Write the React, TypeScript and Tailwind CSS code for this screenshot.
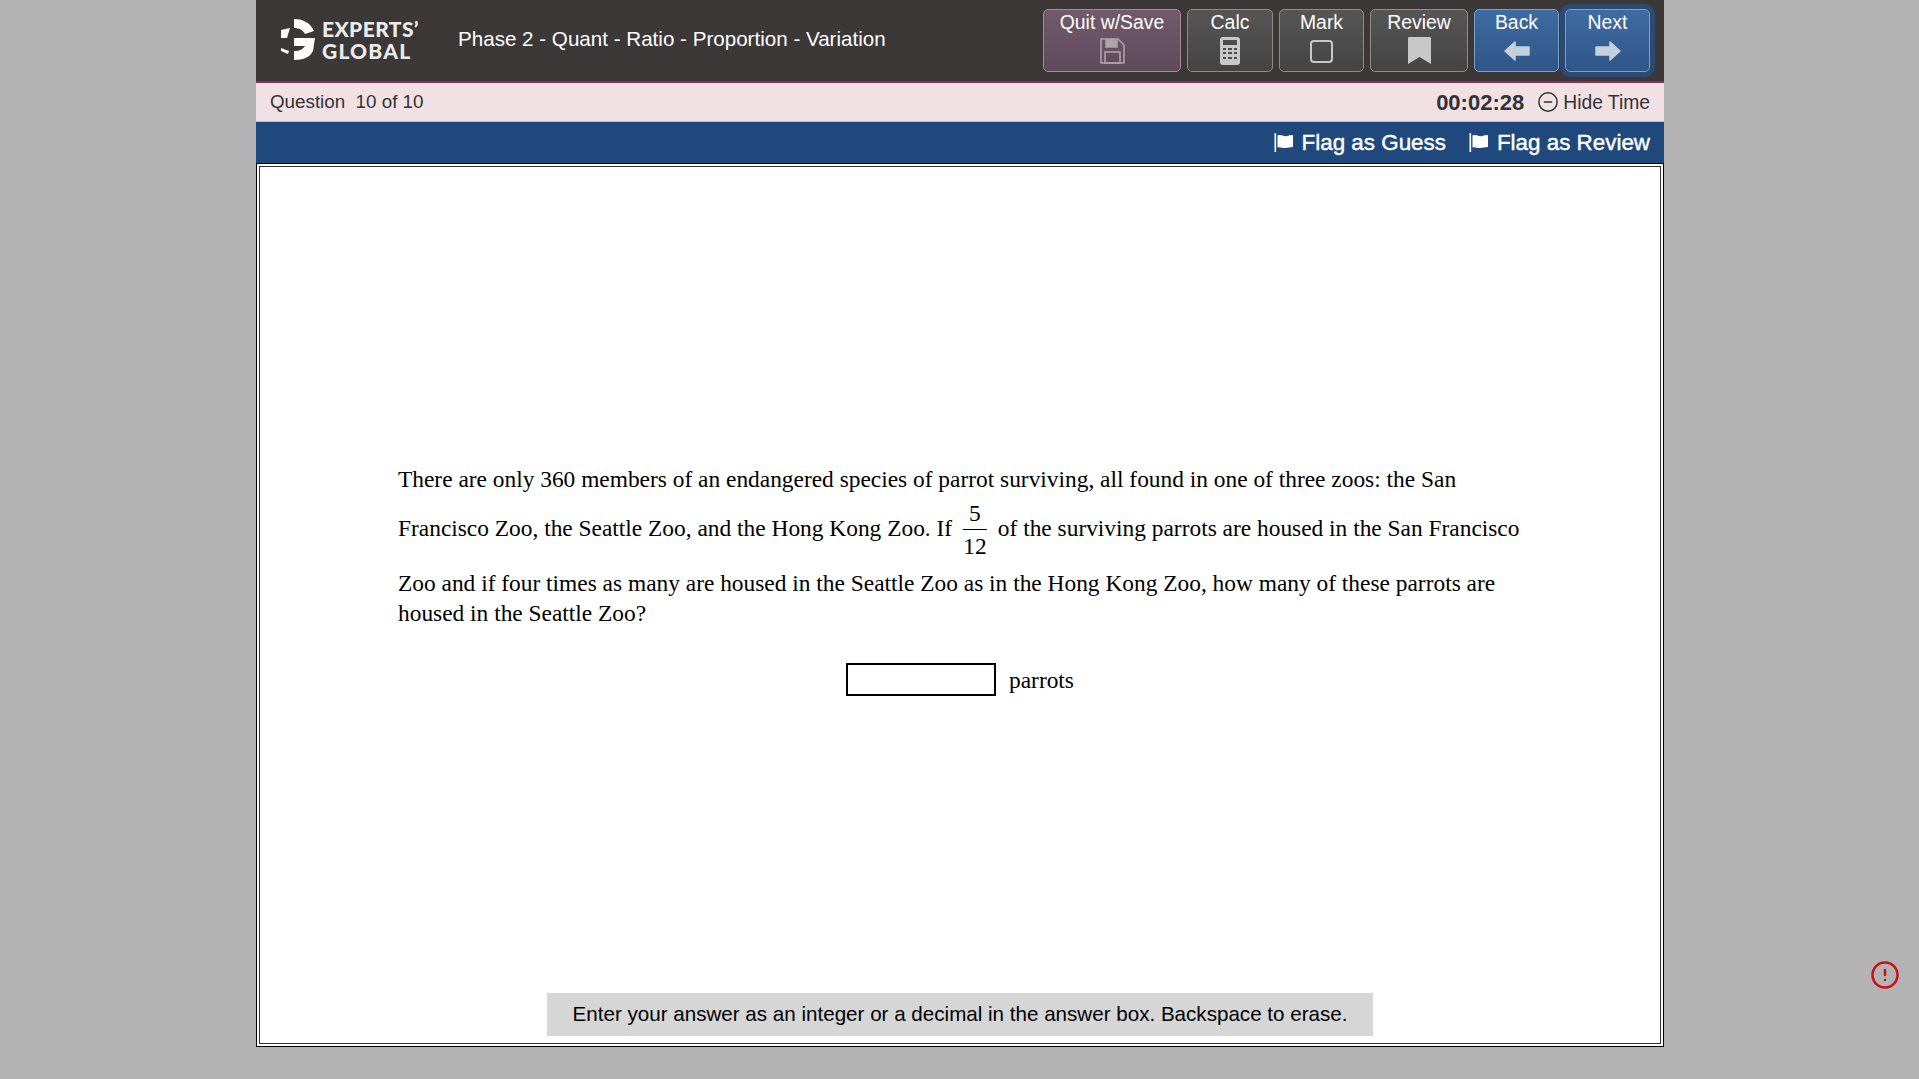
import { CircleAlert, CircleMinus } from 'lucide-react';
import type { ReactNode } from 'react';

const sans = { fontFamily: '"Liberation Sans", Arial, sans-serif' };

function ToolButton({ label, width, tone, children, focused }: { label: string; width: string; tone: string; children: ReactNode; focused?: boolean }) {
  return (
    <button className={`${width} ${tone} ${focused ? 'ring-[5px] ring-[#2c4a72]' : ''} h-[63px] shrink-0 rounded-[5px] border flex flex-col items-center text-white text-[19.4px] leading-[20px] pt-[2px]`}>
      <span>{label}</span>
      <span className="mt-[4px] flex h-[30px] items-center justify-center">{children}</span>
    </button>
  );
}

function Flag() {
  return (
    <svg width="20" height="20" viewBox="0 0 20 20" fill="white">
      <rect x="0.5" y="1" width="1.6" height="19" />
      <path d="M3.5 3.5 C7 2 10 5 13 4 C15 3.5 17 3 19 3 L19 15 C16 15 14 16 11 16 C8 16 6 14.5 3.5 15.5 Z" />
    </svg>
  );
}

function Logo() {
  return (
    <div className="flex items-center gap-[6px]">
      <svg width="36" height="42" viewBox="0 0 36 42" fill="white">
        <path d="M14 0 C22 0 30 3 34 12 L25 15 C23 11 19 9 14 9 Z" />
        <path d="M1 11 L10 9 L7 19 L1 19 Z" />
        <path d="M1 29 L9 32 L8 35 L1 32 Z" />
        <path d="M14 19 L35 19 L33 32 C30 38 24 41 14 41 L14 32 C20 32 23 30 25 27 L14 27 Z" />
      </svg>
      <div className="text-[21px] leading-[22px] font-black text-[#ececec]" style={{ fontFamily: 'Lato, sans-serif' }}>
        <div className="tracking-[0.4px]">EXPERTS’</div>
        <div className="tracking-[1.2px]">GLOBAL</div>
      </div>
    </div>
  );
}

export default function App() {
  return (
    <div className="relative h-[1079px] w-full overflow-hidden bg-[#b3b3b3]" style={sans}>
      <div className="ml-[256px] flex h-[1047px] w-[1408px] flex-col">
        {/* Header */}
        <div className="flex h-[83px] shrink-0 items-center border-b-2 border-[#8c2f5c] bg-[#3b3837] pb-[2px]">
          <div className="ml-[24px] w-[178px] shrink-0"><Logo /></div>
          <div className="text-[20.6px] text-white">Phase 2 - Quant - Ratio - Proportion - Variation</div>
          <div className="ml-auto mr-[14px] mt-[2px] flex items-center gap-[6px]">
            <ToolButton label="Quit w/Save" width="w-[138px]" tone="bg-linear-to-b from-[#725a6b] to-[#5f4a5b] border-[#a08e9b]">
              <svg width="26" height="26" viewBox="0 0 26 26" fill="none" stroke="#aea2ab" strokeWidth="1.6">
                <path d="M2 1 H19 L25 7 V25 H2 Z" strokeLinejoin="round" />
                <path d="M7 1 V9 H18 V1" fill="#aea2ab" />
                <rect x="6" y="14" width="15" height="11" />
              </svg>
            </ToolButton>
            <ToolButton label="Calc" width="w-[86px]" tone="bg-linear-to-b from-[#565656] to-[#444444] border-[#8d8d8d]">
              <svg width="20" height="28" viewBox="0 0 20 28">
                <rect width="20" height="28" rx="3" fill="#c8c8c8" />
                <rect x="3" y="3" width="14" height="5" fill="#4c4c4c" />
                <path d="M3 11h3v2H3zM8 11h4v2H8zM14 11h3v2h-3zM3 15h3v2H3zM8 15h4v2H8zM14 15h3v2h-3zM3 20h3v2H3zM8 20h4v2H8zM14 20h3v2h-3z" fill="#4c4c4c" />
              </svg>
            </ToolButton>
            <ToolButton label="Mark" width="w-[85px]" tone="bg-linear-to-b from-[#565656] to-[#444444] border-[#8d8d8d]">
              <span className="block h-[23px] w-[23px] rounded-[4px] border-2 border-[#c8c8c8]" />
            </ToolButton>
            <ToolButton label="Review" width="w-[98px]" tone="bg-linear-to-b from-[#565656] to-[#444444] border-[#8d8d8d]">
              <svg width="23" height="28" viewBox="0 0 23 28" fill="#c8c8c8">
                <path d="M1 0 H22 Q23 0 23 1 V27 L11.5 20 L0 27 V1 Q0 0 1 0 Z" />
              </svg>
            </ToolButton>
            <ToolButton label="Back" width="w-[85px]" tone="bg-linear-to-b from-[#3e6ca2] to-[#2f5588] border-[#7f9fc6]">
              <svg width="26" height="20" viewBox="0 0 26 20" fill="#c5d0dd" stroke="#c5d0dd" strokeWidth="1.5" strokeLinejoin="round">
                <path d="M1 10 L11 1 V6 H25 V14 H11 V19 Z" />
              </svg>
            </ToolButton>
            <ToolButton label="Next" width="w-[85px]" tone="bg-linear-to-b from-[#3e6ca2] to-[#2f5588] border-[#7f9fc6]" focused>
              <svg width="26" height="20" viewBox="0 0 26 20" fill="#c5d0dd" stroke="#c5d0dd" strokeWidth="1.5" strokeLinejoin="round">
                <path d="M25 10 L15 1 V6 H1 V14 H15 V19 Z" />
              </svg>
            </ToolButton>
          </div>
        </div>

        {/* Question bar */}
        <div className="flex h-[39px] shrink-0 items-center justify-between border-b border-[#c8bfc0] bg-[#f1e1e4] px-[14px] text-[#333]">
          <div className="text-[18.8px]">Question&nbsp; 10 of 10</div>
          <div className="flex items-center">
            <span className="text-[22px] font-bold">00:02:28</span>
            <CircleMinus size={22} strokeWidth={1.6} className="ml-[13px] mr-[4px]" />
            <span className="pt-[2px] text-[19.3px]">Hide Time</span>
          </div>
        </div>

        {/* Flags */}
        <div className="flex h-[41px] shrink-0 items-center justify-end gap-[23px] bg-[#1f497d] px-[14px] text-[22.4px] text-white [-webkit-text-stroke:0.4px_white]">
          <span className="flex items-center gap-[8px]"><Flag />Flag as Guess</span>
          <span className="flex items-center gap-[8px]"><Flag />Flag as Review</span>
        </div>

        {/* Content frame */}
        <div className="flex min-h-0 flex-1 flex-col border border-black bg-white p-[2px]">
          <div className="flex min-h-0 flex-1 flex-col items-center border border-[#333] pb-[7px]">
            <div className="ml-[138px] mt-[297px] w-[1128px] self-start text-[23.4px] leading-[30px] text-black" style={{ fontFamily: '"Liberation Serif", "Times New Roman", serif' }}>
              <p>
                There are only 360 members of an endangered species of parrot surviving, all found in one of three zoos: the San Francisco Zoo, the Seattle Zoo, and the Hong Kong Zoo. If{' '}
                <span className="mx-[5px] inline-flex flex-col items-center pb-[6px] pt-[3px] align-middle leading-[33px]">
                  <span className="h-[32px]">5</span>
                  <span className="h-px w-[24px] bg-black" />
                  <span className="h-[32px]">12</span>
                </span>{' '}
                of the surviving parrots are housed in the San Francisco Zoo and if four times as many are housed in the Seattle Zoo as in the Hong Kong Zoo, how many of these parrots are housed in the Seattle Zoo?
              </p>
              <div className="mt-[35px] flex items-center justify-center gap-[13px] pr-[4px]">
                <input className="h-[33px] w-[150px] border-2 border-black bg-white" />
                <span>parrots</span>
              </div>
            </div>
            <div className="mt-auto w-[826px] bg-[#d6d6d6] pb-[11px] pt-[9px] text-center text-[20.6px] leading-[23px] text-black">
              Enter your answer as an integer or a decimal in the answer box. Backspace to erase.
            </div>
          </div>
        </div>
      </div>

      <CircleAlert size={30} strokeWidth={2} className="absolute left-[1870px] top-[960px] text-[#c8101a]" />
    </div>
  );
}
